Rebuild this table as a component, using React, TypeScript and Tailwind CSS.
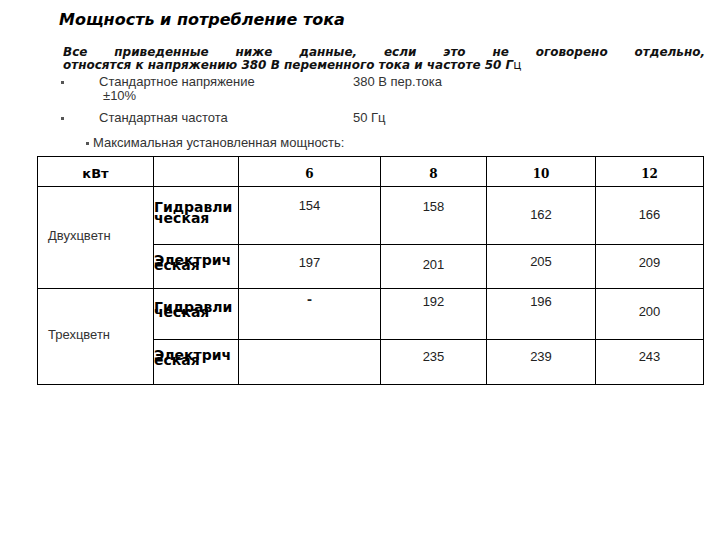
import React from "react";

const sans = "font-['DejaVu_Sans',sans-serif]";
const arial = "font-['Liberation_Sans',Arial,sans-serif]";

function Label({ a, b, lh, pt }: { a: string; b: string; lh: string; pt: string }) {
  return (
    <div className={`${sans} font-bold text-[14px] text-black whitespace-nowrap ${lh} ${pt}`}>
      <div>{a}</div>
      <div>{b}</div>
    </div>
  );
}

function Num({ v, pt }: { v: string; pt: string }) {
  return <div className={`${arial} text-[13px] leading-[16px] text-[#222] text-center ${pt}`}>{v}</div>;
}

export default function App() {
  const td = "border border-black align-top p-0";
  return (
    <div className="w-[720px] h-[540px] bg-white overflow-hidden text-black">
      <div className={`${sans} font-bold italic text-[16px] leading-[20px] pl-[59px] pt-[10px]`}>
        Мощность и потребление тока
      </div>
      <div className={`${sans} font-bold italic text-[12px] leading-[13px] ml-[63px] w-[642px] mt-[16px] text-[#111]`}>
        <div className="text-justify [text-align-last:justify]">
          Все приведенные ниже данные, если это не оговорено отдельно,
        </div>
        <div>
          относятся к напряжению 380 В переменного тока и частоте 50 Г
          <span className="font-normal not-italic">ц</span>
        </div>
      </div>

      <div className={`${arial} text-[13px] leading-[14px] text-[#333] mt-[3px]`}>
        <div className="flex pl-[61px]">
          <div className="w-[38px] pt-[6px]">
            <div className="w-[3px] h-[3px] bg-[#555]" />
          </div>
          <div className="w-[254px]">
            <div>Стандартное напряжение</div>
            <div className="pl-[4px]">±10%</div>
          </div>
          <div>380 В пер.тока</div>
        </div>
        <div className="flex pl-[61px] mt-[8px]">
          <div className="w-[38px] pt-[6px]">
            <div className="w-[3px] h-[3px] bg-[#555]" />
          </div>
          <div className="w-[254px]">Стандартная частота</div>
          <div>50 Гц</div>
        </div>
        <div className="flex items-center pl-[86px] mt-[11px]">
          <div className="w-[3px] h-[3px] bg-[#555] mr-[4px]" />
          <div>Максимальная установленная мощность:</div>
        </div>
      </div>

      <table className="ml-[37px] mt-[6px] border-collapse table-fixed w-[666px]">
        <colgroup>
          <col className="w-[116px]" />
          <col className="w-[85px]" />
          <col className="w-[142px]" />
          <col className="w-[106px]" />
          <col className="w-[109px]" />
          <col className="w-[108px]" />
        </colgroup>
        <tbody>
          <tr className="h-[30px]">
            <td className="border border-black p-0 align-middle text-center">
              <span className={`${sans} font-bold text-[13px]`}>кВт</span>
            </td>
            <td className="border border-black p-0" />
            {["6", "8", "10", "12"].map((h) => (
              <td key={h} className="border border-black p-0 align-middle text-center">
                <span className="font-['DejaVu_Serif',serif] font-bold text-[12px]">{h}</span>
              </td>
            ))}
          </tr>
          <tr className="h-[58px]">
            <td rowSpan={2} className="border border-black p-0 align-middle">
              <div className={`${arial} text-[13px] text-[#333] pl-[10px] pb-[4px]`}>Двухцветн</div>
            </td>
            <td className={td}>
              <Label a="Гидравли" b="ческая" lh="leading-[11px]" pt="pt-[15px]" />
            </td>
            <td className={td}><Num v="154" pt="pt-[11px]" /></td>
            <td className={td}><Num v="158" pt="pt-[12px]" /></td>
            <td className={td}><Num v="162" pt="pt-[20px]" /></td>
            <td className={td}><Num v="166" pt="pt-[20px]" /></td>
          </tr>
          <tr className="h-[44px]">
            <td className={td}>
              <Label a="Электрич" b="еская" lh="leading-[5px]" pt="pt-[13px]" />
            </td>
            <td className={td}><Num v="197" pt="pt-[10px]" /></td>
            <td className={td}><Num v="201" pt="pt-[12px]" /></td>
            <td className={td}><Num v="205" pt="pt-[9px]" /></td>
            <td className={td}><Num v="209" pt="pt-[10px]" /></td>
          </tr>
          <tr className="h-[51px]">
            <td rowSpan={2} className="border border-black p-0 align-middle">
              <div className={`${arial} text-[13px] text-[#333] pl-[10px] pb-[4px]`}>Трехцветн</div>
            </td>
            <td className={td}>
              <Label a="Гидравли" b="ческая" lh="leading-[5px]" pt="pt-[16px]" />
            </td>
            <td className={td}>
              <div className={`${arial} font-bold text-[15px] leading-[16px] text-[#222] text-center pt-[2px]`}>-</div>
            </td>
            <td className={td}><Num v="192" pt="pt-[5px]" /></td>
            <td className={td}><Num v="196" pt="pt-[5px]" /></td>
            <td className={td}><Num v="200" pt="pt-[15px]" /></td>
          </tr>
          <tr className="h-[45px]">
            <td className={td}>
              <Label a="Электрич" b="еская" lh="leading-[5px]" pt="pt-[13px]" />
            </td>
            <td className={td} />
            <td className={td}><Num v="235" pt="pt-[9px]" /></td>
            <td className={td}><Num v="239" pt="pt-[9px]" /></td>
            <td className={td}><Num v="243" pt="pt-[9px]" /></td>
          </tr>
        </tbody>
      </table>
    </div>
  );
}
